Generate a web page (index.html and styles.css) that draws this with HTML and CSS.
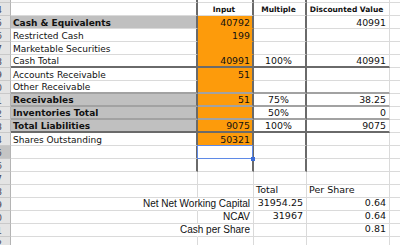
FILE: index.html
```html
<!DOCTYPE html>
<html>
<head>
<meta charset="utf-8">
<link rel="stylesheet" href="styles.css">
</head>
<body>
<div class="sheet">
  <!-- row 3 (partial) -->
  <div class="c rh top"></div><div class="c dv"></div><div class="c dv"></div><div class="c dv"></div><div class="c"></div><div class="c"></div>
  <!-- row 4 header -->
  <div class="c rh"><span>4</span></div><div class="c dv"></div><div class="c dv hd ctr">Input</div><div class="c dv hd ctr">Multiple</div><div class="c hd ctr">Discounted Value</div><div class="c"></div>
  <!-- row 5 -->
  <div class="c rh"><span>5</span></div><div class="c dv gb b">Cash &amp; Equivalents</div><div class="c dv or r">40792</div><div class="c dv"></div><div class="c r">40991</div><div class="c"></div>
  <!-- row 6 -->
  <div class="c rh"><span>6</span></div><div class="c dv">Restricted Cash</div><div class="c dv or r">199</div><div class="c dv"></div><div class="c"></div><div class="c"></div>
  <!-- row 7 -->
  <div class="c rh"><span>7</span></div><div class="c dv">Marketable Securities</div><div class="c dv or r"></div><div class="c dv"></div><div class="c"></div><div class="c"></div>
  <!-- row 8 -->
  <div class="c rh"><span>8</span></div><div class="c dv dh">Cash Total</div><div class="c dv or dh r">40991</div><div class="c dv dh ctr">100%</div><div class="c dh r">40991</div><div class="c"></div>
  <!-- row 9 -->
  <div class="c rh"><span>9</span></div><div class="c dv">Accounts Receivable</div><div class="c dv or r">51</div><div class="c dv"></div><div class="c"></div><div class="c"></div>
  <!-- row 10 -->
  <div class="c rh"><span>10</span></div><div class="c dv gh">Other Receivable</div><div class="c dv or gh r"></div><div class="c dv gh"></div><div class="c gh"></div><div class="c"></div>
  <!-- row 11 -->
  <div class="c rh"><span>11</span></div><div class="c dv gb gh b">Receivables</div><div class="c dv or gh r">51</div><div class="c dv gh ctr">75%</div><div class="c gh r">38.25</div><div class="c"></div>
  <!-- row 12 -->
  <div class="c rh"><span>12</span></div><div class="c dv gb gh b">Inventories Total</div><div class="c dv or gh r"></div><div class="c dv gh ctr">50%</div><div class="c gh r">0</div><div class="c"></div>
  <!-- row 13 -->
  <div class="c rh"><span>13</span></div><div class="c dv gb dh b">Total Liabilities</div><div class="c dv or dh r">9075</div><div class="c dv dh ctr">100%</div><div class="c dh r">9075</div><div class="c"></div>
  <!-- row 14 -->
  <div class="c rh"><span>14</span></div><div class="c dv">Shares Outstanding</div><div class="c dv or r">50321</div><div class="c dv"></div><div class="c"></div><div class="c"></div>
  <!-- row 15 -->
  <div class="c rh rsel"><span>15</span></div><div class="c dv"></div><div class="c dv sel"></div><div class="c dv"></div><div class="c"></div><div class="c"></div>
  <!-- row 16 -->
  <div class="c rh"><span>16</span></div><div class="c dv"></div><div class="c dv"></div><div class="c dv"></div><div class="c"></div><div class="c"></div>
  <!-- row 17 -->
  <div class="c rh"><span>17</span></div><div class="c"></div><div class="c"></div><div class="c"></div><div class="c"></div><div class="c"></div>
  <!-- row 18 -->
  <div class="c rh"><span>18</span></div><div class="c"></div><div class="c"></div><div class="c lo">Total</div><div class="c lo">Per Share</div><div class="c"></div>
  <!-- row 19 -->
  <div class="c rh"><span>19</span></div><div class="c noline"></div><div class="c lo lab r">Net Net Working Capital</div><div class="c lo r">31954.25</div><div class="c lo r">0.64</div><div class="c"></div>
  <!-- row 20 -->
  <div class="c rh"><span>20</span></div><div class="c"></div><div class="c lo lab r">NCAV</div><div class="c lo r">31967</div><div class="c lo r">0.64</div><div class="c"></div>
  <!-- row 21 -->
  <div class="c rh"><span>21</span></div><div class="c noline"></div><div class="c lo lab r">Cash per Share</div><div class="c lo r"></div><div class="c lo r">0.81</div><div class="c"></div>
  <!-- row 22 -->
  <div class="c rh"><span>22</span></div><div class="c"></div><div class="c"></div><div class="c"></div><div class="c"></div><div class="c"></div>
</div>
</body>
</html>
```

FILE: styles.css
```css
html, body {
  margin: 0;
  padding: 0;
  background: #ffffff;
  overflow: hidden;
  width: 400px;
  height: 245px;
}

.sheet {
  display: grid;
  width: 430px;
  grid-template-columns: 11px 187px 56px 53px 83px 40px;
  grid-template-rows: 3px;
  grid-auto-rows: 13px;
  font-family: "DejaVu Sans", Verdana, sans-serif;
  font-size: 9px;
  color: #111;
}

.c {
  box-sizing: border-box;
  border-right: 1px solid #dadada;
  border-bottom: 1px solid #dadada;
  display: flex;
  align-items: flex-end;
  justify-content: flex-start;
  white-space: nowrap;
  overflow: hidden;
  line-height: 10px;
  padding: 0 3px 0 2px;
  background: #ffffff;
}

.rh {
  background: #e4e4e4;
  border-right: 1px solid #b4b4b4;
  border-bottom: 1px solid #c9c9c9;
  justify-content: flex-end;
  padding: 0 8px 0 0;
  font-size: 9px;
  color: #4a4a5a;
}

.rh span {
  flex: none;
}

.rsel {
  background: #c4c4c4;
}

.top {
  border-bottom-color: #c9c9c9;
}

.dv {
  border-right: 2px solid #6a6a6a;
  padding-right: 2px;
}

.dh {
  border-bottom: 2px solid #6a6a6a;
}

.gh {
  border-bottom: 2px solid #a2a2a2;
}

.gb {
  background: #c0c0c0;
}

.or {
  background: #fd9b0b;
  border-bottom-color: #fd9b0b;
}

.or.dh {
  border-bottom-color: #6a6a6a;
}

.or.gh {
  border-bottom-color: #a2a2a2;
}

.b {
  font-weight: bold;
}

.hd {
  font-weight: bold;
  font-size: 7.5px;
}

.ctr {
  justify-content: center;
  padding-left: 0;
  font-size: 9.4px;
}

.hd.ctr {
  font-size: 7.5px;
}

.r {
  justify-content: flex-end;
  font-size: 9.4px;
}

.lo {
  font-size: 9.5px;
  padding-bottom: 2px;
  padding-right: 3px;
}

.lab {
  font-family: "Liberation Sans", Arial, sans-serif;
  font-size: 10px;
  overflow: visible;
  padding-bottom: 1px;
}

.noline {
  border-right-color: #ffffff;
}

.sel {
  position: relative;
  overflow: visible;
}

.sel::before {
  content: "";
  position: absolute;
  left: -1px;
  top: -1px;
  right: -1px;
  bottom: -1px;
  border: 1px solid #5f8ae6;
}

.sel::after {
  content: "";
  position: absolute;
  right: -3px;
  bottom: -3px;
  width: 4px;
  height: 4px;
  background: #3a6cd8;
}
```
